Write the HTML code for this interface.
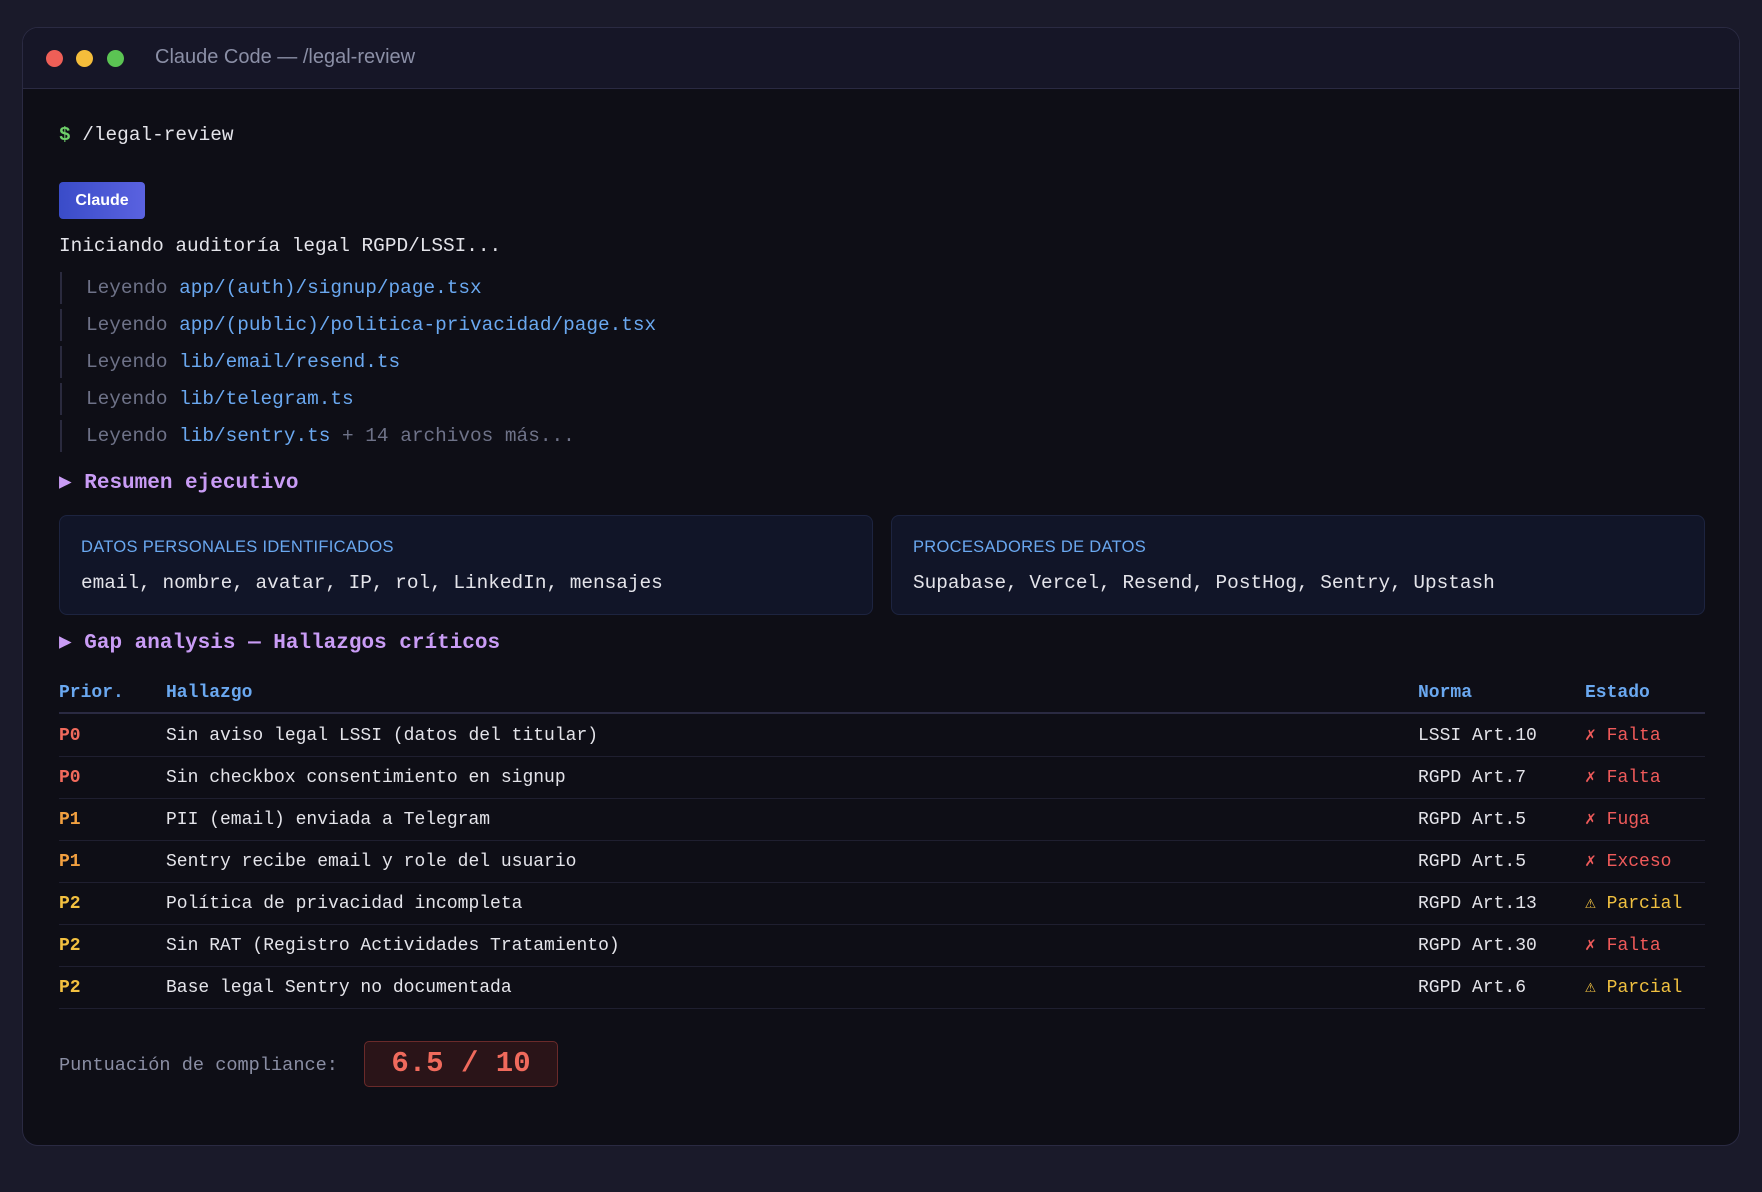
<!DOCTYPE html>
<html><head><meta charset="utf-8"><style>
*{margin:0;padding:0;box-sizing:border-box}
body{width:1762px;height:1192px;background:#1a1a2a;font-family:"Liberation Mono",monospace;font-size:18px;color:#e4e4ea;position:relative;overflow:hidden}
.win{position:absolute;left:22px;top:27px;width:1718px;height:1119px;background:#0e0e16;border:1px solid #2a2a42;border-radius:16px;overflow:hidden}
.bar{position:absolute;left:0;top:0;right:0;height:61px;background:#161627;border-bottom:1px solid #2a2a42}
.dot{position:absolute;top:22px;width:17px;height:17px;border-radius:50%}
.title{position:absolute;left:132px;top:18px;font-family:"Liberation Sans",sans-serif;font-size:20px;color:#8b8fa6}
.t{position:absolute;left:36px;white-space:pre;line-height:22px;font-size:19.4px}
.badge{position:absolute;left:36px;top:154px;width:86px;height:37px;border-radius:4px;background:linear-gradient(90deg,#3a4cc8,#5a62e0);color:#fff;font-family:"Liberation Sans",sans-serif;font-weight:bold;font-size:16px;text-align:center;line-height:37px}
.ley{position:absolute;left:37px;height:32px;border-left:2px solid #2a2a3e;padding-left:24px;line-height:32px;white-space:pre;color:#6e7288;font-size:19.4px}
.ley b{font-weight:normal;color:#6aa8f0}
.h{color:#c99cf5;font-weight:bold;font-size:21px}
.card{position:absolute;top:487px;width:814px;height:100px;background:#111528;border:1px solid #1d2440;border-radius:8px}
.card .l{position:absolute;left:21px;top:22px;font-family:"Liberation Sans",sans-serif;font-size:16.5px;color:#6aa8f0;letter-spacing:.3px}
.card .v{position:absolute;left:21px;top:56px;white-space:pre;font-size:19.4px}
.row{position:absolute;left:36px;width:1646px;height:42px;border-bottom:1px solid #1f1f30;line-height:42px;white-space:pre}
.row span{position:absolute;top:0}
.c1{left:0}.c2{left:107px}.c3{left:1359px}.c4{left:1526px}
.hd{color:#6aa8f0;font-weight:bold;border-bottom:2px solid #2a2a42}
.r{color:#f06a5c;font-weight:bold}.o{color:#f2a040;font-weight:bold}.y{color:#f2c040;font-weight:bold}
.fr{color:#ef5a5a}.fy{color:#f0c040}
</style></head><body>
<div class="win">
<div class="bar">
<div class="dot" style="left:23px;background:#ee5f57"></div>
<div class="dot" style="left:53px;background:#f4bd3b"></div>
<div class="dot" style="left:84px;background:#5bc453"></div>
<div class="title">Claude Code — /legal-review</div>
</div>
<div class="t" style="top:96px"><span style="color:#6fd06a;font-weight:bold">$</span> /legal-review</div>
<div class="badge">Claude</div>
<div class="t" style="top:207px">Iniciando auditoría legal RGPD/LSSI...</div>
<div class="ley" style="top:244px">Leyendo <b>app/(auth)/signup/page.tsx</b></div>
<div class="ley" style="top:281px">Leyendo <b>app/(public)/politica-privacidad/page.tsx</b></div>
<div class="ley" style="top:318px">Leyendo <b>lib/email/resend.ts</b></div>
<div class="ley" style="top:355px">Leyendo <b>lib/telegram.ts</b></div>
<div class="ley" style="top:392px">Leyendo <b>lib/sentry.ts</b> + 14 archivos más...</div>
<div class="t h" style="top:445px">▶ Resumen ejecutivo</div>
<div class="card" style="left:36px"><div class="l">DATOS PERSONALES IDENTIFICADOS</div><div class="v">email, nombre, avatar, IP, rol, LinkedIn, mensajes</div></div>
<div class="card" style="left:868px"><div class="l">PROCESADORES DE DATOS</div><div class="v">Supabase, Vercel, Resend, PostHog, Sentry, Upstash</div></div>
<div class="t h" style="top:605px">▶ Gap analysis — Hallazgos críticos</div>
<div class="row hd" style="top:644px"><span class="c1">Prior.</span><span class="c2">Hallazgo</span><span class="c3">Norma</span><span class="c4">Estado</span></div>
<div class="row" style="top:687px"><span class="c1 r">P0</span><span class="c2">Sin aviso legal LSSI (datos del titular)</span><span class="c3">LSSI Art.10</span><span class="c4 fr">✗ Falta</span></div>
<div class="row" style="top:729px"><span class="c1 r">P0</span><span class="c2">Sin checkbox consentimiento en signup</span><span class="c3">RGPD Art.7</span><span class="c4 fr">✗ Falta</span></div>
<div class="row" style="top:771px"><span class="c1 o">P1</span><span class="c2">PII (email) enviada a Telegram</span><span class="c3">RGPD Art.5</span><span class="c4 fr">✗ Fuga</span></div>
<div class="row" style="top:813px"><span class="c1 o">P1</span><span class="c2">Sentry recibe email y role del usuario</span><span class="c3">RGPD Art.5</span><span class="c4 fr">✗ Exceso</span></div>
<div class="row" style="top:855px"><span class="c1 y">P2</span><span class="c2">Política de privacidad incompleta</span><span class="c3">RGPD Art.13</span><span class="c4 fy">⚠ Parcial</span></div>
<div class="row" style="top:897px"><span class="c1 y">P2</span><span class="c2">Sin RAT (Registro Actividades Tratamiento)</span><span class="c3">RGPD Art.30</span><span class="c4 fr">✗ Falta</span></div>
<div class="row" style="top:939px"><span class="c1 y">P2</span><span class="c2">Base legal Sentry no documentada</span><span class="c3">RGPD Art.6</span><span class="c4 fy">⚠ Parcial</span></div>
<div class="t" style="top:1027px;color:#8a8ea4;font-size:18.6px">Puntuación de compliance:</div>
<div style="position:absolute;left:341px;top:1013px;width:194px;height:46px;border:1px solid #6a2a2a;background:#2a1418;border-radius:5px;color:#f06a5c;font-weight:bold;font-size:29px;text-align:center;line-height:44px">6.5 / 10</div>
</div>
</body></html>
